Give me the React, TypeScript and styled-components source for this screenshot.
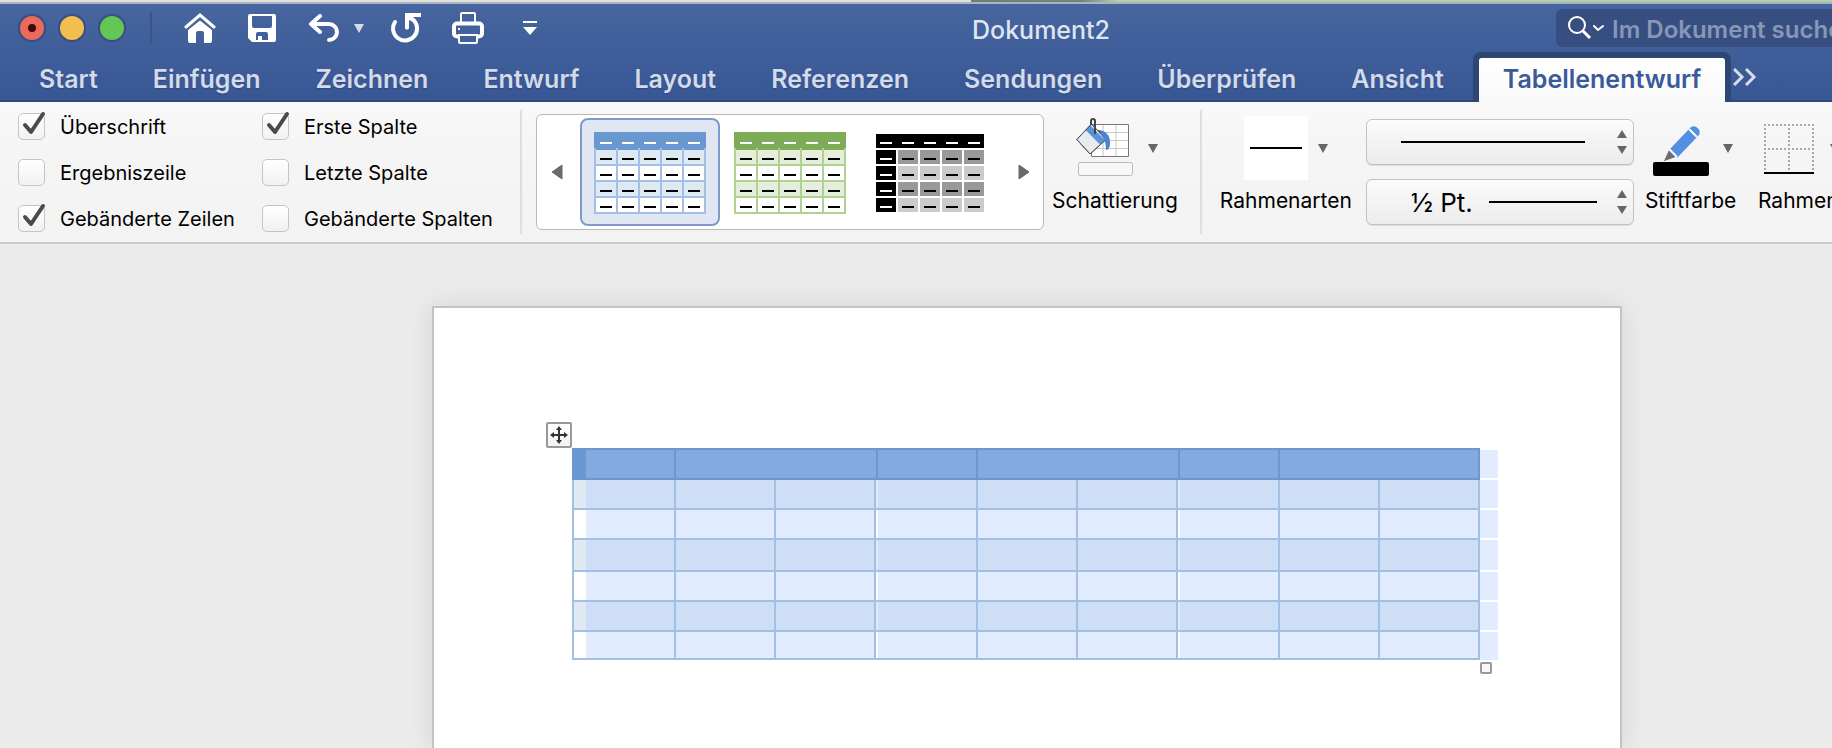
import React, { useState } from "react";
import styled, { createGlobalStyle, css } from "styled-components";

const GlobalStyle = createGlobalStyle`
  * { box-sizing: border-box; }
  html, body { margin: 0; padding: 0; }
  body { background: #ebebeb; overflow: hidden; }
  body, button, input, select { font-family: Inter, "Liberation Sans", sans-serif; }
  button { border: 0; padding: 0; background: none; color: inherit; cursor: pointer; }
`;

const Shell = styled.div`
  display: flex;
  flex-direction: column;
  min-height: 100vh;
  overflow: hidden;
`;

const Desktop = styled.div`
  height: 4px;
  background:
    linear-gradient(to bottom, transparent 2px, #a9b3c2 2px),
    linear-gradient(to right, #e2e2dd 53%, #6f7f7b 53%, #75827d 59%, #b3cfac 61%);
`;

const Header = styled.header`
  background: linear-gradient(to bottom, #47669f, #375694);
`;

const TitleBar = styled.div`
  display: flex;
  align-items: center;
  height: 48px;
  padding-left: 20px;
`;

const Lights = styled.div`
  display: flex;
  gap: 16px;
`;

const Light = styled.button<{ $color: string }>`
  display: grid;
  place-items: center;
  width: 24px;
  height: 24px;
  border-radius: 50%;
  background: ${(p) => p.$color};
  box-shadow: 0 0 0 2px #36507f;
`;

const Dot = styled.span`
  width: 8px;
  height: 8px;
  border-radius: 50%;
  background: #460806;
`;

const TitleRule = styled.div`
  width: 2px;
  height: 32px;
  margin: 0 32px 0 26px;
  background: #3a5488;
`;

const QuickTools = styled.div`
  display: flex;
  align-items: center;
  gap: 30px;
`;

const Split = styled.div`
  display: flex;
  align-items: center;
  gap: 14px;
  margin-right: -4px;
`;

const Tool = styled.button`
  display: grid;
  place-items: center;
  width: 32px;
  height: 32px;
  color: #fff;
`;

const SmallTool = styled.button`
  display: grid;
  place-items: center;
  width: 10px;
  height: 32px;
  color: #d5dbe8;
`;

const Title = styled.h1`
  flex: 1;
  margin: 0;
  padding-top: 3px;
  text-align: center;
  font-size: 25px;
  font-weight: 500;
  line-height: 32px;
  color: #dfe5f0;
`;

const Search = styled.label`
  display: flex;
  align-items: center;
  flex: none;
  width: 276px;
  height: 38px;
  margin-left: 20px;
  padding-left: 12px;
  gap: 8px;
  border-radius: 6px 0 0 6px;
  background: #364f80;
  overflow: hidden;
  svg { flex: none; }
`;

const SearchInput = styled.input`
  flex: 1;
  min-width: 0;
  height: 38px;
  padding: 2px 0 0;
  border: 0;
  outline: 0;
  background: none;
  font-size: 24px;
  font-weight: 600;
  color: #fff;
  &::placeholder { color: #8797b8; opacity: 1; }
`;

const Tabs = styled.nav`
  display: flex;
  height: 50px;
  padding-left: 11px;
  box-shadow: inset 0 -2px #2c4a82;
`;

const Tab = styled.button<{ $active?: boolean }>`
  padding: 6px 27px 2px 28px;
  font-size: 25px;
  font-weight: 600;
  line-height: 32px;
  color: #d3dae8;
  text-shadow: 0 1px 1px #2f4a80;
  ${(p) =>
    p.$active &&
    css`
      margin-left: 2px;
      padding: 0 24px 2px;
      border: 6px solid #2d4674;
      border-bottom: 0;
      border-radius: 8px 8px 0 0;
      background: linear-gradient(to bottom, #fff, #f9f9f9);
      background-clip: padding-box;
      color: #3a5a99;
      text-shadow: none;
    `}
`;

const MoreTabs = styled.button`
  display: grid;
  place-items: center;
  width: 28px;
  color: #d7deeb;
`;

const Ribbon = styled.section`
  display: flex;
  align-items: flex-start;
  height: 142px;
  padding: 8px 0 0 18px;
  background: linear-gradient(to bottom, #f9f9f9, #f5f5f5 40px, #f3f3f3);
  border-bottom: 2px solid #cacaca;
  overflow: hidden;
`;

const Options = styled.div`
  display: grid;
  flex: none;
  grid-template-columns: 244px 227px;
  grid-auto-rows: 26px;
  row-gap: 20px;
  margin-top: 3px;
`;

const Option = styled.label`
  display: flex;
  align-items: center;
  gap: 15px;
`;

const OptionText = styled.span`
  padding-top: 2px;
  font-size: 20px;
  line-height: 26px;
  white-space: nowrap;
  color: #000;
`;

const BoxWrap = styled.span`
  position: relative;
  width: 27px;
  height: 26px;
`;

const Box = styled.input`
  appearance: none;
  display: block;
  width: 27px;
  height: 27px;
  margin: 0;
  border: 1px solid #c4c4c4;
  border-radius: 5px;
  background: linear-gradient(to bottom, #fff, #f1f1f1);
  & + svg { visibility: hidden; }
  &:checked + svg { visibility: visible; }
`;

const Tick = styled.svg`
  position: absolute;
  left: 3px;
  top: -2px;
  pointer-events: none;
`;

const Divider = styled.div<{ $before: number; $after: number }>`
  flex: none;
  width: 2px;
  height: 124px;
  margin: 0 ${(p) => p.$after}px 0 ${(p) => p.$before}px;
  background: #dedede;
`;

const Gallery = styled.div`
  display: flex;
  flex: none;
  height: 116px;
  margin-top: 4px;
  padding: 3px 0;
  border: 1px solid #b9b9b9;
  border-radius: 6px;
  background: #fff;
`;

const GalleryArrow = styled.button<{ $side: "left" | "right" }>`
  display: grid;
  place-items: center;
  width: 43px;
  padding-${(p) => (p.$side === "left" ? "right" : "left")}: 4px;
  color: #6a6a6a;
`;

const Tile = styled.button<{ $selected?: boolean }>`
  display: grid;
  place-items: center;
  width: 140px;
  height: 108px;
  padding-top: 2px;
  border: 2px solid ${(p) => (p.$selected ? "#7f9aca" : "transparent")};
  border-radius: 8px;
  background: ${(p) => (p.$selected ? "#e1e7f2" : "#fff")};
`;

const Group = styled.div<{ $gap: number }>`
  display: flex;
  flex: none;
  flex-direction: column;
  align-items: center;
  gap: 9px;
  margin: 6px 0 0 ${(p) => p.$gap}px;
`;

const GroupTools = styled.div<{ $compact?: boolean }>`
  display: flex;
  align-items: center;
  gap: ${(p) => (p.$compact ? 10 : 14)}px;
  height: 64px;
  padding-left: ${(p) => (p.$compact ? 0 : 4)}px;
`;

const IconButton = styled.button`
  display: block;
  svg { display: block; }
`;

const DropButton = styled.button`
  display: grid;
  place-items: center;
  width: 10px;
  height: 64px;
  color: #666;
`;

const GroupLabel = styled.span`
  font-size: 21px;
  line-height: 24px;
  color: #000;
  white-space: nowrap;
`;

const LineSample = styled.span`
  display: grid;
  place-items: center;
  width: 64px;
  height: 64px;
  background: #fff;
`;

const Stroke = styled.span<{ $w: number }>`
  display: block;
  width: ${(p) => p.$w}px;
  height: 2px;
  background: #000;
`;

const Pickers = styled.div`
  display: flex;
  flex: none;
  flex-direction: column;
  gap: 14px;
  margin: 9px 0 0 14px;
`;

const Picker = styled.div`
  position: relative;
  width: 268px;
  height: 46px;
`;

const PickerSelect = styled.select`
  appearance: none;
  display: block;
  width: 100%;
  height: 100%;
  padding: 0 0 0 44px;
  border: 1px solid #c2c2c2;
  border-radius: 6px;
  background: linear-gradient(to bottom, #fbfbfb, #ececec);
  box-shadow: 0 1px #dcdcdc;
  font-size: 26px;
  color: #000;
`;

const PickerFace = styled.span`
  position: absolute;
  inset: 0 7px 0 0;
  display: flex;
  align-items: center;
  justify-content: flex-end;
  pointer-events: none;
`;

const Stepper = styled.svg<{ $gap: number }>`
  margin-left: ${(p) => p.$gap}px;
`;

const Canvas = styled.main`
  display: flex;
  flex: 1;
  min-height: 504px;
  padding: 62px 210px 0 432px;
  background: #ebebeb;
`;

const Page = styled.article`
  flex: 1;
  min-width: 0;
  padding: 140px 122px 0 138px;
  border: 2px solid #c3c3c3;
  border-bottom: 0;
  background: #fff;
  box-shadow: 0 0 24px rgba(0, 0, 0, 0.1);
`;

const TableWrap = styled.div`
  position: relative;
`;

const DocTable = styled.table`
  width: 100%;
  table-layout: fixed;
  border-collapse: separate;
  border-spacing: 0;
`;

const Col = styled.col<{ $w: number }>`
  width: ${(p) => p.$w}px;
`;

const Row = styled.tr<{ $h: number }>`
  height: ${(p) => p.$h}px;
`;

const HeadCell = styled.th`
  padding: 0;
  border: 0 solid #6997d0;
  border-width: 2px 2px 2px 0;
  background: #83aadf;
  &:first-child {
    border-left-width: 2px;
    background: linear-gradient(to right, #6997d0 12px, #83aadf 12px);
  }
`;

const Cell = styled.td<{ $band: boolean; $bare?: number }>`
  --fill: ${(p) => (p.$band ? "#cedef7" : "#e1edfe")};
  --plain: ${(p) => (p.$band ? "#dfe9f4" : "#fff")};
  padding: 0;
  border: 0 solid #a3c0e2;
  border-width: 0 2px 2px 0;
  background: linear-gradient(to right, var(--plain) ${(p) => p.$bare || 0}px, var(--fill) ${(p) => p.$bare || 0}px);
  &:first-child { border-left-width: 2px; }
`;

const RowEnd = styled.td<{ $edge?: "first" | "last" }>`
  padding: 0;
  border: 0 solid #fff;
  border-top-width: ${(p) => (p.$edge === "first" ? 2 : 0)}px;
  border-bottom-width: ${(p) => (p.$edge === "last" ? 0 : 2)}px;
  background: #e1edfe;
`;

const MoveHandle = styled.button`
  position: absolute;
  left: -26px;
  top: -26px;
  display: grid;
  place-items: center;
  width: 26px;
  height: 26px;
  border: 2px solid #999;
  border-radius: 2px;
  background: linear-gradient(to bottom, #fff, #f2f2f2);
`;

const ResizeHandle = styled.button`
  position: absolute;
  right: 6px;
  bottom: -14px;
  width: 12px;
  height: 12px;
  border: 2px solid #999;
  border-radius: 2px;
  background: #f7f7f7;
`;

const Down = () => (
  <svg width="10" height="9" viewBox="0 0 10 9"><path d="M0 0H10L5 9Z" fill="currentColor" /></svg>
);

const HomeIcon = () => (
  <svg width="32" height="30" viewBox="0 0 32 30">
    <path d="M2 14 16 2 30 14" fill="none" stroke="currentColor" strokeWidth="3" strokeLinecap="round" strokeLinejoin="miter" />
    <path d="M4 17 16 7.500 28 17V28a2 2 0 0 1-2 2H20V20a2 2 0 0 0-2-2H14a2 2 0 0 0-2 2V30H6a2 2 0 0 1-2-2Z" fill="currentColor" />
  </svg>
);

const SaveIcon = () => (
  <svg width="28" height="28" viewBox="0 0 28 28">
    <path fillRule="evenodd" fill="currentColor" d="M2 0H26a2 2 0 0 1 2 2V26a2 2 0 0 1-2 2H4L0 24V2a2 2 0 0 1 2-2ZM4 2V12a2 2 0 0 0 2 2H22a2 2 0 0 0 2-2V2ZM8 26H20V20a2 2 0 0 0-2-2H10a2 2 0 0 0-2 2Z" />
    <path d="M10 22H14V27H10Z" fill="currentColor" />
  </svg>
);

const UndoIcon = () => (
  <svg width="30" height="28" viewBox="0 0 30 28" fill="none" stroke="currentColor" strokeWidth="4" strokeLinecap="round">
    <path d="M11 2 2 10 11 18" strokeLinejoin="round" />
    <path d="M3 10H20A8 8 0 0 1 20 26" />
  </svg>
);

const RedoIcon = () => (
  <svg width="30" height="30" viewBox="0 0 30 30">
    <path d="M4 9A12 12 0 1 0 23 7.500" fill="none" stroke="currentColor" strokeWidth="4" strokeLinecap="round" />
    <path d="M14 0H30V4H22L25 7 22 9 18 7V14a2 2 0 0 1-4 1Z" fill="currentColor" />
  </svg>
);

const PrintIcon = () => (
  <svg width="32" height="32" viewBox="0 0 32 32" fill="none" stroke="currentColor">
    <path d="M9 11V2a1 1 0 0 1 1-1H22a1 1 0 0 1 1 1V11" strokeWidth="2" />
    <rect x="2" y="11.500" width="28" height="13" rx="3" strokeWidth="4" />
    <path d="M7 23H25V30a1 1 0 0 1-1 1H8a1 1 0 0 1-1-1Z" fill="#42609a" strokeWidth="2" />
    <path d="M6 16H8V18H6Z" fill="currentColor" stroke="none" />
  </svg>
);

const CustomizeIcon = () => (
  <svg width="14" height="14" viewBox="0 0 14 14">
    <path d="M0 0H14V2H0ZM0 6H14L7 14Z" fill="currentColor" />
  </svg>
);

const SearchIcon = () => (
  <svg width="36" height="24" viewBox="0 0 36 24" fill="none" stroke="#fff" strokeWidth="2">
    <circle cx="9" cy="9" r="8" />
    <path d="M15 15 22 22" strokeWidth="3" />
    <path d="M26 10 30 14 35 10" strokeLinecap="round" />
  </svg>
);

const PaintIcon = () => (
  <svg width="58" height="64" viewBox="0 0 58 64">
    <path d="M15.500 8.500H52.500V40.500H15.500Z" fill="#fff" stroke="#777" />
    <path d="M27 9V40M40 9V40M16 16.500H52M16 24.500H52M16 32.500H52" stroke="#c8c8c8" />
    <path d="M15.500 8 30 23.500 14 38 .8 23.500Z" fill="#e8eaee" stroke="#555" />
    <path d="M14 9 9.500 14 24 28.500 29 24Z" fill="#5a92d8" />
    <path d="M15.500 8 30 23.500 14 38 .8 23.500Z" fill="none" stroke="#555" />
    <path d="M22 14C30 14 34 20 34 26 34 31 33 34 30 34 30 28 29 22 22 14Z" fill="#4a84d0" />
    <path d="M19 18V5a2 2 0 0 0-4 0V9" fill="none" stroke="#444" strokeWidth="2" />
    <path d="M22 14 25 17" stroke="#555" />
    <rect x="2.500" y="46.500" width="54" height="13" rx="2" fill="#f7f7f7" stroke="#b9b9b9" />
  </svg>
);

const PenIcon = () => (
  <svg width="56" height="64" viewBox="0 0 56 64">
    <path d="M17 33 38 11a6 6 0 0 1 8 8L24 42Z" fill="#5490e2" />
    <path d="M36 13 44 21" stroke="#fff" strokeWidth="2" />
    <path d="M16 33 24 41 10 46Z" fill="#6e6e6e" stroke="#f5f5f5" />
    <path d="M16 33 24 41" stroke="#fff" strokeWidth="2" />
    <rect y="46" width="56" height="14" rx="2" fill="#000" />
  </svg>
);

const BordersIcon = () => (
  <svg width="56" height="64" viewBox="0 0 56 64">
    <path d="M4 9H54M4 33H54M5 8V54M29 8V54M53 8V54" stroke="#aaa" strokeWidth="2" strokeDasharray="2 2" />
    <path d="M4 57H54" stroke="#000" strokeWidth="2" />
  </svg>
);

const MoveIcon = () => (
  <svg width="18" height="18" viewBox="0 0 18 18">
    <path d="M9 2V16M2 9H16" stroke="#333" strokeWidth="2" />
    <path d="M9 0 12 4H6ZM9 18 12 14H6ZM0 9 4 6V12ZM18 9 14 6V12Z" fill="#333" />
  </svg>
);

type Look = { head: string; line: string; band: string; plain: string; first?: string };

const StylePreview = ({ look }: { look: Look }) => {
  const cols = [0, 1, 2, 3, 4];
  const rows = [0, 1, 2, 3];
  const dark = Boolean(look.first);
  return (
    <svg width="112" height="82" viewBox="0 0 112 82">
      {!dark && <path d="M0 16H112V82H0Z" fill={look.line} />}
      <path d={dark ? "M2 2H110V16H2Z" : "M0 0H112V16H110V18H90V16H88V18H68V16H66V18H46V16H44V18H24V16H22V18H2V16H0Z"} fill={look.head} />
      {cols.map((c) => (
        <React.Fragment key={c}>
          <rect x={6 + c * 22} y="10" width="12" height="2" fill="#fff" />
          {rows.map((r) => (
            <React.Fragment key={r}>
              <rect
                x={2 + c * 22} y={18 + r * 16} width="20" height="14"
                fill={dark && c === 0 ? look.first : r % 2 === 0 ? look.band : look.plain}
              />
              <rect x={6 + c * 22} y={26 + r * 16} width="12" height="2" fill={dark && c === 0 ? "#fff" : "#000"} />
            </React.Fragment>
          ))}
        </React.Fragment>
      ))}
    </svg>
  );
};

const looks: Look[] = [
  { head: "#6997d0", line: "#a3c0e2", band: "#dfe9f4", plain: "#fff" },
  { head: "#7eab55", line: "#b1d093", band: "#e4eeda", plain: "#fff" },
  { head: "#000", line: "#fff", band: "#999", plain: "#cbcbcb", first: "#000" },
];

const tabs = ["Start", "Einfügen", "Zeichnen", "Entwurf", "Layout", "Referenzen", "Sendungen", "Überprüfen", "Ansicht", "Tabellenentwurf"];

const options: [string, boolean][] = [
  ["Überschrift", true],
  ["Erste Spalte", true],
  ["Ergebniszeile", false],
  ["Letzte Spalte", false],
  ["Gebänderte Zeilen", true],
  ["Gebänderte Spalten", false],
];

const columnWidths = [104, 100, 100, 2, 100, 100, 100, 2, 100, 100, 100, 18];
const headSpans = [1, 3, 1, 3, 1, 2];
const rowHeights = [30, 30, 32, 30, 30, 28];
const bodySpans = [1, 1, 1, 2, 1, 1, 2, 1, 1];

const Steps = ({ gap }: { gap: number }) => (
  <Stepper $gap={gap} width="10" height="24" viewBox="0 0 10 24">
    <path d="M0 8 5 0 10 8ZM0 16H10L5 24Z" fill="#666" />
  </Stepper>
);

export default function App() {
  const [selected, setSelected] = useState(0);
  return (
    <Shell>
      <GlobalStyle />
      <Desktop />
      <Header>
        <TitleBar>
          <Lights>
            <Light $color="#ec695e" aria-label="Schließen"><Dot /></Light>
            <Light $color="#f4be4f" aria-label="Minimieren" />
            <Light $color="#63c655" aria-label="Vollbild" />
          </Lights>
          <TitleRule />
          <QuickTools>
            <Tool aria-label="Startseite"><HomeIcon /></Tool>
            <Tool aria-label="Speichern"><SaveIcon /></Tool>
            <Split>
              <Tool aria-label="Rückgängig"><UndoIcon /></Tool>
              <SmallTool aria-label="Rückgängig-Liste"><Down /></SmallTool>
            </Split>
            <Tool aria-label="Wiederholen"><RedoIcon /></Tool>
            <Tool aria-label="Drucken"><PrintIcon /></Tool>
            <Tool aria-label="Symbolleiste anpassen"><CustomizeIcon /></Tool>
          </QuickTools>
          <Title>Dokument2</Title>
          <Search>
            <SearchIcon />
            <SearchInput type="text" aria-label="Suche" placeholder="Im Dokument suchen" />
          </Search>
        </TitleBar>
        <Tabs>
          {tabs.map((name) => (
            <Tab key={name} $active={name === "Tabellenentwurf"}>{name}</Tab>
          ))}
          <MoreTabs aria-label="Weitere Registerkarten">
            <svg width="24" height="18" viewBox="0 0 24 18" fill="none" stroke="currentColor" strokeWidth="3">
              <path d="M1 1 9 9 1 17M13 1 21 9 13 17" />
            </svg>
          </MoreTabs>
        </Tabs>
      </Header>

      <Ribbon>
        <Options>
          {options.map(([name, on]) => (
            <Option key={name}>
              <BoxWrap>
                <Box type="checkbox" defaultChecked={on} />
                <Tick width="26" height="26" viewBox="0 0 26 26" fill="none" stroke="#4a4a4a" strokeWidth="4" strokeLinecap="round" strokeLinejoin="round">
                  <path d="M4 14 10 21 22 3" />
                </Tick>
              </BoxWrap>
              <OptionText>{name}</OptionText>
            </Option>
          ))}
        </Options>
        <Divider $before={31} $after={14} />
        <Gallery>
          <GalleryArrow $side="left" aria-label="Vorherige Formatvorlagen">
            <svg width="12" height="16" viewBox="0 0 12 16"><path d="M11 1V15L1 8Z" fill="currentColor" stroke="currentColor" strokeLinejoin="round" /></svg>
          </GalleryArrow>
          {looks.map((look, i) => (
            <Tile key={i} $selected={i === selected} onClick={() => setSelected(i)} aria-label={`Tabellenformat ${i + 1}`}>
              <StylePreview look={look} />
            </Tile>
          ))}
          <GalleryArrow $side="right" aria-label="Weitere Formatvorlagen">
            <svg width="12" height="16" viewBox="0 0 12 16"><path d="M1 1V15L11 8Z" fill="currentColor" stroke="currentColor" strokeLinejoin="round" /></svg>
          </GalleryArrow>
        </Gallery>
        <Group $gap={8}>
          <GroupTools>
            <IconButton aria-label="Schattierung anwenden"><PaintIcon /></IconButton>
            <DropButton aria-label="Schattierungsfarben"><Down /></DropButton>
          </GroupTools>
          <GroupLabel>Schattierung</GroupLabel>
        </Group>
        <Divider $before={22} $after={18} />
        <Group $gap={0}>
          <GroupTools $compact>
            <IconButton aria-label="Rahmenart anwenden"><LineSample><Stroke $w={52} /></LineSample></IconButton>
            <DropButton aria-label="Liste der Rahmenarten"><Down /></DropButton>
          </GroupTools>
          <GroupLabel>Rahmenarten</GroupLabel>
        </Group>
        <Pickers>
          <Picker>
            <PickerSelect aria-label="Linienart"><option aria-label="Einfache Linie" /></PickerSelect>
            <PickerFace><Stroke $w={184} /><Steps gap={32} /></PickerFace>
          </Picker>
          <Picker>
            <PickerSelect aria-label="Linienstärke"><option>½ Pt.</option></PickerSelect>
            <PickerFace><Stroke $w={108} /><Steps gap={20} /></PickerFace>
          </Picker>
        </Pickers>
        <Group $gap={11}>
          <GroupTools>
            <IconButton aria-label="Stiftfarbe anwenden"><PenIcon /></IconButton>
            <DropButton aria-label="Stiftfarben"><Down /></DropButton>
          </GroupTools>
          <GroupLabel>Stiftfarbe</GroupLabel>
        </Group>
        <Group $gap={20}>
          <GroupTools>
            <IconButton aria-label="Rahmen anwenden"><BordersIcon /></IconButton>
            <DropButton aria-label="Liste der Rahmen"><Down /></DropButton>
          </GroupTools>
          <GroupLabel>Rahmen</GroupLabel>
        </Group>
      </Ribbon>

      <Canvas>
        <Page>
          <TableWrap>
            <DocTable>
              <colgroup>{columnWidths.map((w, i) => <Col key={i} $w={w} />)}</colgroup>
              <thead>
                <Row $h={32}>
                  {headSpans.map((span, i) => <HeadCell key={i} colSpan={span} />)}
                  <RowEnd $edge="first" />
                </Row>
              </thead>
              <tbody>
                {rowHeights.map((h, r) => (
                  <Row key={r} $h={h}>
                    {bodySpans.map((span, c) => (
                      <Cell key={c} colSpan={span} $band={r % 2 === 0} $bare={c === 0 ? 12 : span === 2 ? 2 : 0} />
                    ))}
                    <RowEnd $edge={r === rowHeights.length - 1 ? "last" : undefined} />
                  </Row>
                ))}
              </tbody>
            </DocTable>
            <MoveHandle aria-label="Tabelle verschieben"><MoveIcon /></MoveHandle>
            <ResizeHandle aria-label="Tabellengröße ändern" />
          </TableWrap>
        </Page>
      </Canvas>
    </Shell>
  );
}
